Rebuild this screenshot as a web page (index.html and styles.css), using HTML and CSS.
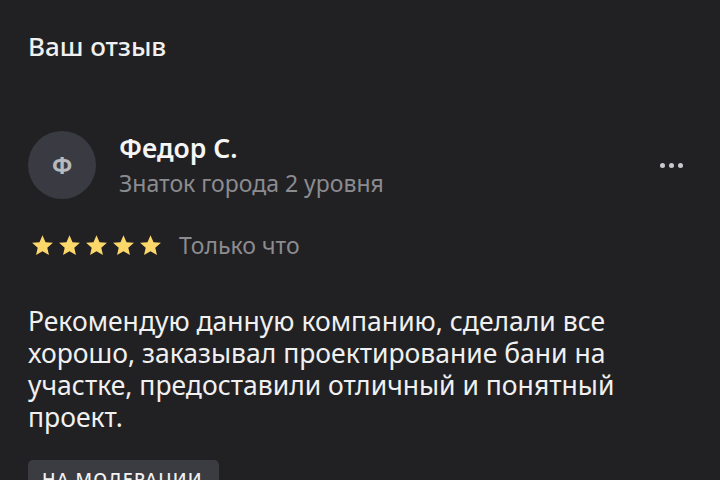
FILE: index.html
```html
<!DOCTYPE html>
<html lang="ru">
<head>
  <meta charset="UTF-8">
  <meta name="viewport" content="width=device-width, initial-scale=1.0">
  <title>Ваш отзыв</title>
  <link rel="stylesheet" href="styles.css">
</head>
<body>
  <div class="review">
    <h1 class="review-title">Ваш отзыв</h1>

    <div class="author">
      <div class="avatar">Ф</div>
      <div class="author-info">
        <div class="author-name">Федор С.</div>
        <div class="author-level">Знаток города 2 уровня</div>
      </div>
      <button class="more" type="button" aria-label="Ещё">
        <span></span><span></span><span></span>
      </button>
    </div>

    <div class="rating">
      <div class="stars">
        <svg viewBox="0 0 24 24"><path d="M12 2.2l2.9 6.6 7.1.6-5.4 4.7 1.6 7-6.2-3.7-6.2 3.7 1.6-7L2 9.4l7.1-.6z"/></svg>
        <svg viewBox="0 0 24 24"><path d="M12 2.2l2.9 6.6 7.1.6-5.4 4.7 1.6 7-6.2-3.7-6.2 3.7 1.6-7L2 9.4l7.1-.6z"/></svg>
        <svg viewBox="0 0 24 24"><path d="M12 2.2l2.9 6.6 7.1.6-5.4 4.7 1.6 7-6.2-3.7-6.2 3.7 1.6-7L2 9.4l7.1-.6z"/></svg>
        <svg viewBox="0 0 24 24"><path d="M12 2.2l2.9 6.6 7.1.6-5.4 4.7 1.6 7-6.2-3.7-6.2 3.7 1.6-7L2 9.4l7.1-.6z"/></svg>
        <svg viewBox="0 0 24 24"><path d="M12 2.2l2.9 6.6 7.1.6-5.4 4.7 1.6 7-6.2-3.7-6.2 3.7 1.6-7L2 9.4l7.1-.6z"/></svg>
      </div>
      <span class="review-date">Только что</span>
    </div>

    <p class="review-text">Рекомендую данную компанию, сделали все хорошо, заказывал проектирование бани на участке, предоставили отличный и понятный проект.</p>

    <span class="status">На модерации</span>
  </div>
</body>
</html>
```

FILE: styles.css
```css
body {
  margin: 0;
  background-color: #212124;
  font-family: 'Noto Sans', 'Open Sans', sans-serif;
  color: #f2f2f2;
}

.review {
  padding: 28px 28px 0;
}

.review-title {
  margin: 0;
  font-size: 26px;
  font-weight: 500;
  line-height: 36px;
  color: #f0f0f0;
}

.author {
  display: flex;
  align-items: center;
  margin-top: 67px;
}

.avatar {
  width: 68px;
  height: 68px;
  border-radius: 50%;
  background-color: #3a3b42;
  color: #b8b9bd;
  font-size: 23px;
  font-weight: 700;
  display: flex;
  align-items: center;
  justify-content: center;
  flex-shrink: 0;
}

.author-info {
  flex: 1;
  margin-left: 23px;
}

.author-name {
  font-size: 26.5px;
  font-weight: 600;
  line-height: 32px;
  color: #f5f5f5;
}

.author-level {
  margin-top: 3px;
  font-size: 23px;
  line-height: 32px;
  color: #8c8c90;
}

.more {
  display: flex;
  gap: 4px;
  padding: 0;
  margin-right: 9px;
  border: none;
  background: none;
}

.more span {
  width: 5px;
  height: 5px;
  border-radius: 50%;
  background-color: #c9c9cd;
}

.rating {
  display: flex;
  align-items: center;
  height: 32px;
  margin-top: 30px;
}

.stars {
  display: flex;
  gap: 2px;
  margin-left: 2px;
}

.stars svg {
  width: 25px;
  height: 25px;
  fill: #fcd86a;
}

.review-date {
  margin-left: 16px;
  font-size: 23px;
  line-height: 32px;
  color: #8c8c90;
}

.review-text {
  width: 610px;
  margin: 44px 0 0;
  font-size: 26.5px;
  line-height: 32px;
  color: #f0f0f0;
}

.status {
  display: inline-block;
  margin-top: 27px;
  padding: 7px 16px 7px 14px;
  border-radius: 5px;
  background-color: #3b3c41;
  color: #f2f2f2;
  font-size: 18px;
  font-weight: 500;
  line-height: 24px;
  letter-spacing: 1.2px;
  text-transform: uppercase;
}
```
